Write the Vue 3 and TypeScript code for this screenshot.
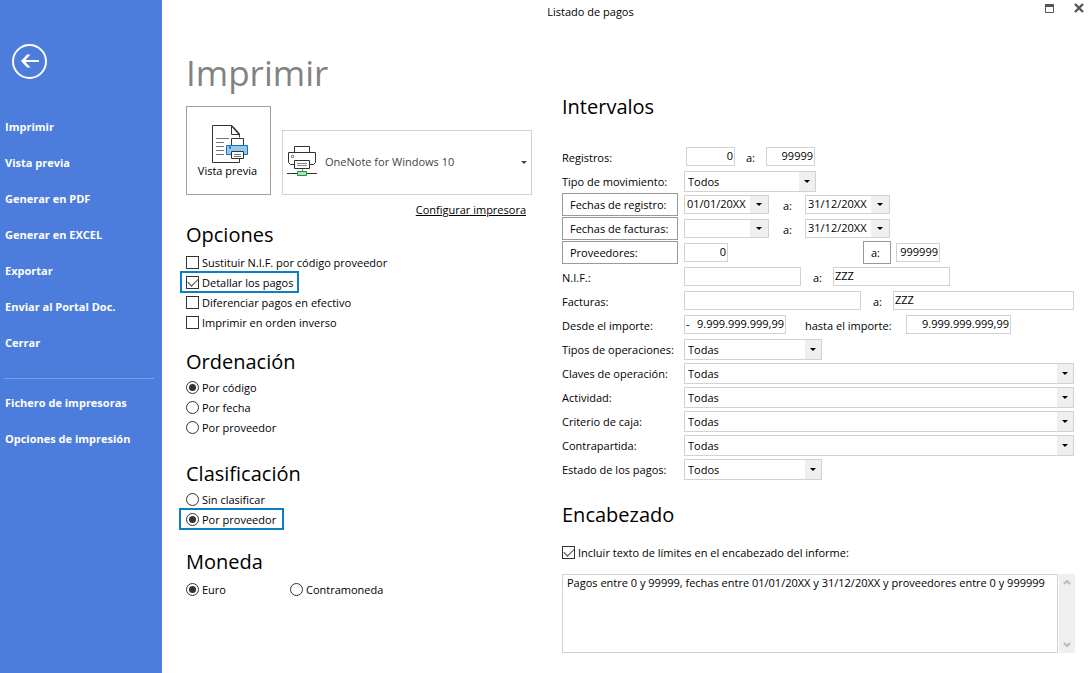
<script setup lang="ts">
import { ref } from 'vue'

interface Option {
  id: string
  label: string
  marked?: boolean
}

interface ComboRow {
  id: string
  label: string
  value: string
  short?: boolean
}

const actions: string[] = [
  'Imprimir',
  'Vista previa',
  'Generar en PDF',
  'Generar en EXCEL',
  'Exportar',
  'Enviar al Portal Doc.',
  'Cerrar',
]
const settings: string[] = ['Fichero de impresoras', 'Opciones de impresión']

const options: Option[] = [
  { id: 'nif', label: 'Sustituir N.I.F. por código proveedor' },
  { id: 'detail', label: 'Detallar los pagos', marked: true },
  { id: 'cash', label: 'Diferenciar pagos en efectivo' },
  { id: 'reverse', label: 'Imprimir en orden inverso' },
]
const checkedOptions = ref<string[]>(['detail'])

const orders: Option[] = [
  { id: 'code', label: 'Por código' },
  { id: 'date', label: 'Por fecha' },
  { id: 'supplier', label: 'Por proveedor' },
]
const order = ref('code')

const groupings: Option[] = [
  { id: 'none', label: 'Sin clasificar' },
  { id: 'supplier', label: 'Por proveedor', marked: true },
]
const grouping = ref('supplier')

const currencies: Option[] = [
  { id: 'euro', label: 'Euro' },
  { id: 'counter', label: 'Contramoneda' },
]
const currency = ref('euro')

const combos: ComboRow[] = [
  { id: 'operations', label: 'Tipos de operaciones:', value: 'Todas', short: true },
  { id: 'keys', label: 'Claves de operación:', value: 'Todas' },
  { id: 'activity', label: 'Actividad:', value: 'Todas' },
  { id: 'cashbasis', label: 'Criterio de caja:', value: 'Todas' },
  { id: 'counterpart', label: 'Contrapartida:', value: 'Todas' },
  { id: 'status', label: 'Estado de los pagos:', value: 'Todos', short: true },
]

const recordFrom = ref('0')
const recordTo = ref('99999')
const entryFrom = ref('01/01/20XX')
const entryTo = ref('31/12/20XX')
const invoiceDateFrom = ref('')
const invoiceDateTo = ref('31/12/20XX')
const supplierFrom = ref('0')
const supplierTo = ref('999999')
const nifFrom = ref('')
const nifTo = ref('ZZZ')
const invoiceFrom = ref('')
const invoiceTo = ref('ZZZ')
const amountFrom = ref('9.999.999.999,99')
const amountTo = ref('9.999.999.999,99')
const includeLimits = ref(true)
const headerText = ref(
  'Pagos entre 0 y 99999, fechas entre 01/01/20XX y 31/12/20XX y proveedores entre 0 y 999999',
)
</script>

<template>
  <div class="window">
    <aside class="sidebar">
      <button class="back" type="button" aria-label="Volver">
        <svg width="35" height="35" viewBox="0 0 35 35" fill="none" stroke="#fff">
          <circle cx="17.500" cy="17.500" r="16.500" stroke-width="2" />
          <path d="M11 17H27" stroke-width="2" />
          <path d="M9 17L15 10.500H18.500L12.500 17L18.500 23.500H15z" fill="#fff" stroke="none" />
        </svg>
      </button>
      <nav class="menu">
        <button v-for="item in actions" :key="item" type="button">{{ item }}</button>
        <hr />
        <button v-for="item in settings" :key="item" type="button">{{ item }}</button>
      </nav>
    </aside>

    <div class="main">
      <header class="titlebar">
        <span class="caption">Listado de pagos</span>
        <div class="controls">
          <button type="button" aria-label="Maximizar">
            <svg width="10" height="10" viewBox="0 0 10 10">
              <path d="M.5 1V9.500H8.500V1" fill="none" stroke="#555" />
              <path d="M0 1H9V4H0z" fill="#555" />
            </svg>
          </button>
          <button type="button" aria-label="Cerrar ventana">
            <svg width="10" height="10" viewBox="0 0 10 10">
              <path d="M1 1L9 9M9 1L1 9" stroke="#555" stroke-width="2.400" />
            </svg>
          </button>
        </div>
      </header>

      <div class="columns">
        <div class="left">
          <h1>Imprimir</h1>
          <div class="output">
            <button class="preview" type="button">
              <svg width="37" height="39" viewBox="0 0 37 39" fill="none" stroke="#333">
                <path d="M27.500 34V37.500H.5V.5H19.500L27.500 9V12.500M19.500 .5V9.500H27.500" />
                <path d="M20 1L27 9" stroke-width="1.600" />
                <path d="M4 13.500H17M4 17.500H12M4 21.500H12M4 25.500H12M4 29.500H12" stroke="#777" />
                <path d="M19.500 20V13.500H31.500V20" fill="#fff" />
                <path d="M14.500 20.500H35.500V29.500H14.500z" fill="#91c8ee" stroke="#1470b8" />
                <path d="M17 22.500H19" stroke="#1470b8" stroke-width="2" />
                <path d="M19.500 26.500H31.500V33.500H19.500z" fill="#fff" />
                <path d="M22 29.500H29M22 31.500H29" stroke="#777" />
              </svg>
              <span>Vista previa</span>
            </button>
            <div class="printer">
              <svg width="30" height="31" viewBox="0 0 30 31" fill="none" stroke="#333">
                <path d="M7.500 6V.5H22.500V6" />
                <path d="M7 18.500H3.500L1.500 16.500V6.500H28.500V16.500L26.500 18.500H23" />
                <path d="M7.500 14.500H22.500V22.500H7.500z" fill="#fff" />
                <path d="M10 17.500H20M10 19.500H20M15.500 23V25" stroke="#888" />
                <path d="M4.500 9.500H6.500V11.500H4.500z" stroke="#888" />
                <path d="M0 27.500H30" />
                <path d="M10.500 25.500H19.500V29.500H10.500z" fill="#b4dfb4" stroke="#129640" />
              </svg>
              <select aria-label="Impresora">
                <option>OneNote for Windows 10</option>
              </select>
              <span class="arrow plain"><svg width="6" height="4" viewBox="0 0 6 4"><path d="M0 0H6L3 3z" fill="#444" /></svg></span>
            </div>
          </div>
          <a class="configure" href="#">Configurar impresora</a>

          <section class="group">
            <h2>Opciones</h2>
            <label v-for="o in options" :key="o.id" class="choice" :class="{ marked: o.marked }">
              <input v-model="checkedOptions" type="checkbox" :value="o.id" />{{ o.label }}
            </label>
          </section>
          <section class="group order">
            <h2>Ordenación</h2>
            <label v-for="o in orders" :key="o.id" class="choice">
              <input v-model="order" type="radio" name="order" :value="o.id" />{{ o.label }}
            </label>
          </section>
          <section class="group grouping">
            <h2>Clasificación</h2>
            <label v-for="o in groupings" :key="o.id" class="choice" :class="{ marked: o.marked }">
              <input v-model="grouping" type="radio" name="grouping" :value="o.id" />{{ o.label }}
            </label>
          </section>
          <section class="group currency">
            <h2>Moneda</h2>
            <div class="pair">
              <label v-for="o in currencies" :key="o.id" class="choice">
                <input v-model="currency" type="radio" name="currency" :value="o.id" />{{ o.label }}
              </label>
            </div>
          </section>
        </div>

        <div class="right">
          <h2>Intervalos</h2>
          <div class="rows">
            <div class="row">
              <label class="name" for="rec-from">Registros:</label>
              <div class="fields inset">
                <input id="rec-from" v-model="recordFrom" class="box number w-record" />
                <label class="to" for="rec-to">a:</label>
                <input id="rec-to" v-model="recordTo" class="box number w-record" />
              </div>
            </div>
            <div class="row">
              <label class="name" for="movement">Tipo de movimiento:</label>
              <div class="fields">
                <div class="combo w-move">
                  <select id="movement"><option>Todos</option></select>
                  <span class="arrow"><svg width="6" height="4" viewBox="0 0 6 4"><path d="M0 0H6L3 3z" /></svg></span>
                </div>
              </div>
            </div>
            <div class="row">
              <button class="pick" type="button">Fechas de registro:</button>
              <div class="fields">
                <div class="date">
                  <input v-model="entryFrom" aria-label="Fecha de registro desde" />
                  <button type="button" aria-label="Elegir fecha"><svg width="6" height="4" viewBox="0 0 6 4"><path d="M0 0H6L3 3z" /></svg></button>
                </div>
                <label class="to wide" for="entry-to">a:</label>
                <div class="date">
                  <input id="entry-to" v-model="entryTo" />
                  <button type="button" aria-label="Elegir fecha"><svg width="6" height="4" viewBox="0 0 6 4"><path d="M0 0H6L3 3z" /></svg></button>
                </div>
              </div>
            </div>
            <div class="row">
              <button class="pick" type="button">Fechas de facturas:</button>
              <div class="fields">
                <div class="date">
                  <input v-model="invoiceDateFrom" aria-label="Fecha de factura desde" />
                  <button type="button" aria-label="Elegir fecha"><svg width="6" height="4" viewBox="0 0 6 4"><path d="M0 0H6L3 3z" /></svg></button>
                </div>
                <label class="to wide" for="invoice-date-to">a:</label>
                <div class="date">
                  <input id="invoice-date-to" v-model="invoiceDateTo" />
                  <button type="button" aria-label="Elegir fecha"><svg width="6" height="4" viewBox="0 0 6 4"><path d="M0 0H6L3 3z" /></svg></button>
                </div>
              </div>
            </div>
            <div class="row">
              <button class="pick" type="button">Proveedores:</button>
              <div class="fields">
                <input v-model="supplierFrom" class="box number w-supplier" aria-label="Proveedor desde" />
                <button class="pick small" type="button">a:</button>
                <input v-model="supplierTo" class="box number w-supplier" aria-label="Proveedor hasta" />
              </div>
            </div>
            <div class="row">
              <label class="name" for="nif-from">N.I.F.:</label>
              <div class="fields">
                <input id="nif-from" v-model="nifFrom" class="box w-nif" />
                <label class="to" for="nif-to">a:</label>
                <input id="nif-to" v-model="nifTo" class="box w-nif" />
              </div>
            </div>
            <div class="row">
              <label class="name" for="inv-from">Facturas:</label>
              <div class="fields">
                <input id="inv-from" v-model="invoiceFrom" class="box w-invoice" />
                <label class="to" for="inv-to">a:</label>
                <input id="inv-to" v-model="invoiceTo" class="box grow" />
              </div>
            </div>
            <div class="row">
              <label class="name" for="amt-from">Desde el importe:</label>
              <div class="fields">
                <div class="box signed w-amount">
                  <span>-</span>
                  <input id="amt-from" v-model="amountFrom" class="number" />
                </div>
                <label class="to amount" for="amt-to">hasta el importe:</label>
                <input id="amt-to" v-model="amountTo" class="box number w-amount" />
              </div>
            </div>
            <div v-for="c in combos" :key="c.id" class="row">
              <label class="name" :for="c.id">{{ c.label }}</label>
              <div class="fields">
                <div class="combo" :class="c.short ? 'w-short' : 'grow'">
                  <select :id="c.id"><option>{{ c.value }}</option></select>
                  <span class="arrow"><svg width="6" height="4" viewBox="0 0 6 4"><path d="M0 0H6L3 3z" /></svg></span>
                </div>
              </div>
            </div>
          </div>

          <section class="heading">
            <h2>Encabezado</h2>
            <label class="choice">
              <input v-model="includeLimits" type="checkbox" />Incluir texto de límites en el encabezado del informe:
            </label>
            <div class="note">
              <textarea v-model="headerText" aria-label="Texto del encabezado"></textarea>
              <div class="scroll">
                <button type="button" aria-label="Subir">
                  <svg width="8" height="6" viewBox="0 0 8 6"><path d="M1 5L4 2L7 5" fill="none" stroke="#bbb" stroke-width="2" /></svg>
                </button>
                <button type="button" aria-label="Bajar">
                  <svg width="8" height="6" viewBox="0 0 8 6"><path d="M1 1L4 4L7 1" fill="none" stroke="#bbb" stroke-width="2" /></svg>
                </button>
              </div>
            </div>
          </section>
        </div>
      </div>
    </div>
  </div>
</template>

<style>
body {
  margin: 0;
  background: #fff;
}
</style>

<style scoped>
.window,
.window * {
  box-sizing: border-box;
}
.window {
  display: flex;
  min-height: 100vh;
  font-family: "Open Sans", "Noto Sans", sans-serif;
  font-size: 11px;
  color: #000;
}
button,
input,
select,
textarea {
  font: inherit;
  color: inherit;
  margin: 0;
  padding: 0;
  border: 0;
  border-radius: 0;
  background: none;
  outline: none;
}
svg {
  display: block;
  flex: none;
}
h1,
h2 {
  margin: 0;
  font-weight: 400;
}
h1 {
  font-size: 35px;
  line-height: 48px;
  color: #828282;
}
h2 {
  font-size: 20px;
  line-height: 30px;
}

/* Sidebar */
.sidebar {
  flex: none;
  width: 162px;
  padding-top: 44px;
  background: #4d7ddc;
  color: #fff;
}
.back {
  display: block;
  margin-left: 12px;
}
.menu {
  display: flex;
  flex-direction: column;
  margin-top: 29px;
}
.menu button {
  height: 36px;
  padding-left: 5px;
  text-align: left;
  font-weight: 700;
}
.menu hr {
  height: 1px;
  margin: 18px 8px 5px 4px;
  border: 0;
  background: #7a9de6;
}

/* Title bar */
.main {
  flex: 1;
  min-width: 0;
}
.titlebar {
  display: flex;
  height: 24px;
}
.caption {
  flex: 1;
  text-align: center;
  line-height: 24px;
}
.controls {
  display: flex;
  justify-content: flex-end;
  align-items: flex-start;
  gap: 19px;
  width: 73px;
  padding: 3px 8px 0 0;
}

/* Columns */
.columns {
  display: flex;
  gap: 30px;
  padding: 0 18px 18px 24px;
}
.left {
  flex: none;
  width: 346px;
  padding-top: 25px;
}
.right {
  flex: 1;
  min-width: 0;
  padding-top: 68px;
}

/* Printer */
.output {
  display: flex;
  align-items: flex-end;
  gap: 11px;
  margin-top: 9px;
}
.preview {
  display: flex;
  flex-direction: column;
  align-items: center;
  justify-content: center;
  width: 85px;
  height: 89px;
  padding: 2px 2px 0 0;
  border: 1px solid #a0a0a0;
  line-height: 14px;
}
.preview svg {
  margin-left: 5px;
}
.printer {
  position: relative;
  display: flex;
  align-items: center;
  gap: 8px;
  flex: 1;
  height: 65px;
  padding: 0 0 2px 4px;
  border: 1px solid #d2d2d2;
  color: #444;
}
.printer select {
  flex: 1;
  height: 100%;
  appearance: none;
}
.configure {
  display: block;
  margin: 5px 6px 0 0;
  line-height: 20px;
  text-align: right;
  color: #000;
}

/* Choices */
.group h2 {
  margin-bottom: 2px;
}
.group.order {
  margin-top: 15px;
}
.group.grouping {
  margin-top: 22px;
}
.group.order h2,
.group.grouping h2 {
  margin-bottom: 0;
}
.group.currency {
  margin-top: 18px;
}
.choice {
  display: flex;
  align-items: center;
  gap: 3px;
  width: fit-content;
  height: 20px;
}
.choice.marked {
  height: 22px;
  margin: -1px 0 -1px -6px;
  padding: 0 4px;
  border: 2px solid #0a7fc2;
}
.grouping .choice.marked {
  margin-left: -7px;
  padding: 0 6px 0 5px;
}
.choice input {
  appearance: none;
  display: grid;
  place-items: center;
  flex: none;
  width: 13px;
  height: 13px;
  border: 1px solid #333;
  background: #fff;
}
.choice input[type="radio"] {
  border-radius: 50%;
}
.choice input[type="radio"]:checked::before {
  content: "";
  width: 7px;
  height: 7px;
  border-radius: 50%;
  background: #333;
}
.choice input[type="checkbox"]:checked::before {
  content: "";
  width: 9px;
  height: 5px;
  margin-bottom: 3px;
  border: solid #444;
  border-width: 0 0 1px 1px;
  transform: rotate(-45deg);
}
.pair {
  display: grid;
  grid-template-columns: 104px 1fr;
}

/* Interval rows */
.rows {
  margin-top: 23px;
}
.row {
  display: grid;
  grid-template-columns: 116px 1fr;
  gap: 6px;
  height: 24px;
}
.name {
  padding-top: 1px;
  line-height: 24px;
  white-space: nowrap;
}
.fields {
  display: flex;
  align-items: flex-start;
  min-width: 0;
}
.fields.inset {
  padding-left: 2px;
}
.pick {
  height: 23px;
  padding-left: 7px;
  border: 1px solid #999;
  text-align: left;
}
.pick.small {
  width: 28px;
  margin: 0 5px 0 135px;
}
.to {
  flex: none;
  width: 32px;
  padding: 1px 0 0 12px;
  line-height: 24px;
}
.inset .to {
  width: 31px;
  padding-left: 11px;
}
.to.wide {
  width: 36px;
  padding-left: 14px;
}
.to.amount {
  width: 120px;
  padding-left: 19px;
}
.box,
.date {
  height: 19px;
  margin-top: 2px;
  border: 1px solid #d2d2d2;
}
.box {
  padding: 0 1px 2px;
}
.number {
  text-align: right;
}
.signed {
  display: flex;
}
.signed input {
  flex: 1;
  min-width: 0;
}
.date {
  display: flex;
  width: 85px;
}
.date input {
  flex: 1;
  min-width: 0;
  padding: 0 0 2px 2px;
}
.date button {
  display: grid;
  place-items: center;
  width: 18px;
  background: #efefef;
}
.combo {
  position: relative;
  height: 21px;
  margin-top: 2px;
  border: 1px solid #d2d2d2;
}
.combo select {
  display: block;
  width: 100%;
  height: 100%;
  padding-left: 3px;
  appearance: none;
}
.arrow {
  position: absolute;
  top: 0;
  right: 0;
  bottom: 0;
  display: grid;
  place-items: center;
  width: 16px;
  background: #efefef;
  pointer-events: none;
}
.arrow.plain {
  width: 14px;
  background: none;
}
.w-record {
  width: 49px;
}
.w-supplier {
  width: 44px;
}
.w-nif {
  width: 117px;
}
.w-invoice {
  width: 177px;
}
.w-amount {
  width: 102px;
}
.amount + .w-amount {
  width: 105px;
}
.w-move {
  width: 132px;
}
.w-short {
  width: 138px;
}
.grow {
  flex: 1;
  min-width: 0;
}

/* Header text */
.heading {
  margin-top: 19px;
}
.heading .choice {
  margin-top: 12px;
}
.note {
  display: flex;
  gap: 1px;
  margin: 12px -1px 0 0;
}
.note textarea {
  flex: 1;
  min-width: 0;
  height: 79px;
  padding: 0 4px;
  border: 1px solid #d2d2d2;
  line-height: 16px;
  resize: none;
}
.scroll {
  display: flex;
  flex-direction: column;
  justify-content: space-between;
  width: 16px;
  background: #efefef;
}
.scroll button {
  display: grid;
  place-items: center;
  height: 16px;
}
</style>
